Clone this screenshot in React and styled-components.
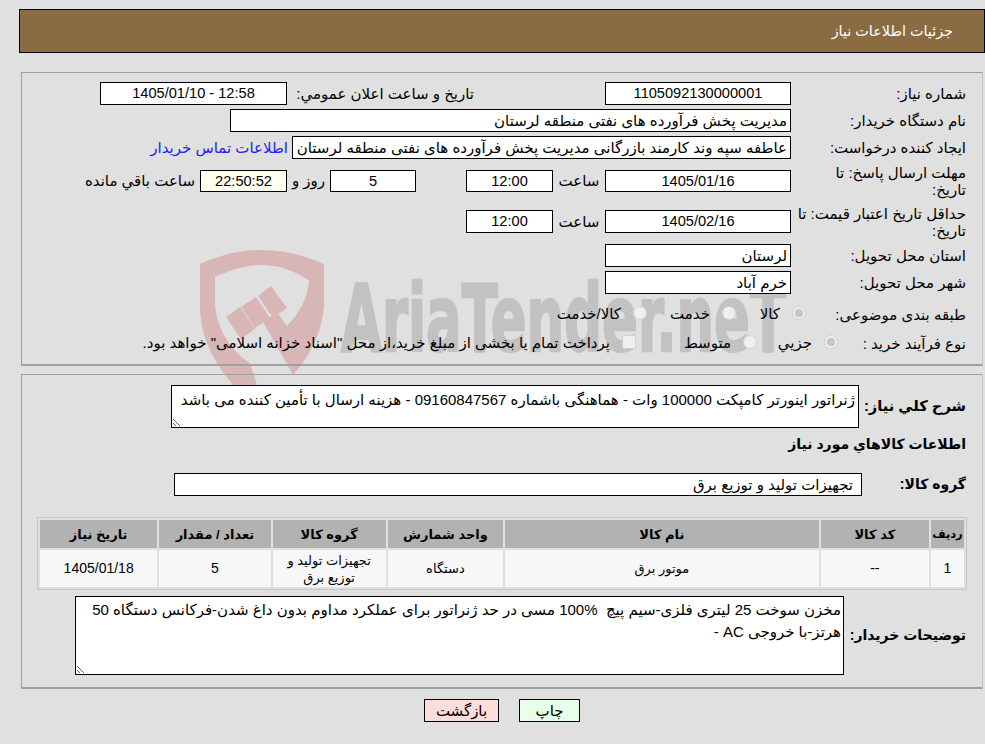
import styled, { createGlobalStyle } from 'styled-components'

const FONT = `"Liberation Sans", "DejaVu Sans", sans-serif`

const GlobalStyle = createGlobalStyle`
  html, body {
    margin: 0;
    padding: 0;
    background: #e0e0e0;
  }
  body {
    font-family: ${FONT};
    font-size: 15px;
    color: #000;
  }
`

const App = () => {
    return (
        <Page dir="rtl">
            <GlobalStyle />
            <Watermark />
            <Header>جزئیات اطلاعات نیاز</Header>

            <InfoPanel>
                <Row>
                    <Label>شماره نیاز:</Label>
                    <Field $w={186} $digits>1105092130000001</Field>
                    <Caption $w={318} $pad={131}>تاريخ و ساعت اعلان عمومي:</Caption>
                    <Field $w={187} $digits>12:58 - 1405/01/10</Field>
                </Row>
                <Row>
                    <Label>نام دستگاه خریدار:</Label>
                    <Field $w={561} $right>مدیریت پخش فرآورده های نفتی منطقه لرستان</Field>
                </Row>
                <Row>
                    <Label>ایجاد کننده درخواست:</Label>
                    <Field $w={499} $right>عاطفه سپه وند کارمند بازرگانی مدیریت پخش فرآورده های نفتی منطقه لرستان</Field>
                    <ContactLink href="#">اطلاعات تماس خریدار</ContactLink>
                </Row>
                <Row $h={36}>
                    <Label $pad={30}>مهلت ارسال پاسخ: تا تاریخ:</Label>
                    <Field $w={186} $h={22} $digits>1405/01/16</Field>
                    <Caption $w={52} $center>ساعت</Caption>
                    <Field $w={87} $h={22} $digits>12:00</Field>
                    <Caption $w={50} />
                    <Field $w={86} $h={22} $digits>5</Field>
                    <Caption $w={43} $center>روز و</Caption>
                    <Field $w={87} $h={22} $digits $timer>22:50:52</Field>
                    <Caption $w={112} $pad={5}>ساعت باقي مانده</Caption>
                </Row>
                <Row $h={37}>
                    <Label>حداقل تاریخ اعتبار قیمت: تا تاریخ:</Label>
                    <Field $w={186} $digits>1405/02/16</Field>
                    <Caption $w={52} $center>ساعت</Caption>
                    <Field $w={87} $digits>12:00</Field>
                </Row>
                <Row>
                    <Label>استان محل تحویل:</Label>
                    <Field $w={186} $right>لرستان</Field>
                </Row>
                <Row>
                    <Label>شهر محل تحویل:</Label>
                    <Field $w={186} $right>خرم آباد</Field>
                </Row>
                <Row $h={32}>
                    <Label $w={160}>طبقه بندی موضوعی:</Label>
                    <Option $w={70}><Radio $checked />کالا</Option>
                    <Option $w={89}><Radio />خدمت</Option>
                    <Option><Radio />کالا/خدمت</Option>
                </Row>
                <Row $h={18}>
                    <Label $w={128}>نوع فرآیند خرید :</Label>
                    <Option $w={81}><Radio $checked />جزيي</Option>
                    <Option $w={121}><Radio />متوسط</Option>
                    <Option><CheckBox />پرداخت تمام یا بخشی از مبلغ خرید،از محل "اسناد خزانه اسلامی" خواهد بود.</Option>
                </Row>
            </InfoPanel>

            <GoodsPanel>
                <Row $h={43}>
                    <BoldLabel $w={107} $size={14.7}>شرح کلي نياز:</BoldLabel>
                    <TextBox
                        $w={688}
                        $h={43}
                        $pad="4px 3px"
                        readOnly
                        defaultValue="ژنراتور اینورتر کامپکت 100000 وات - هماهنگی باشماره 09160847567 - هزینه ارسال با تأمین کننده می باشد"
                    />
                </Row>
                <Heading>اطلاعات کالاهاي مورد نياز</Heading>
                <Row>
                    <BoldLabel $w={104}>گروه کالا:</BoldLabel>
                    <Field $w={688} $right $indent={8}>تجهیزات تولید و توزیع برق</Field>
                </Row>
                <Table>
                    <thead>
                        <tr>
                            <Th $w={33} $size={11.5}>ردیف</Th>
                            <Th $w={108}>کد کالا</Th>
                            <Th $w={313}>نام کالا</Th>
                            <Th $w={115}>واحد شمارش</Th>
                            <Th $w={113}>گروه کالا</Th>
                            <Th $w={111}>تعداد / مقدار</Th>
                            <Th $w={117}>تاریخ نیاز</Th>
                        </tr>
                    </thead>
                    <tbody>
                        <tr>
                            <Td $digits>1</Td>
                            <Td $digits>--</Td>
                            <Td>موتور برق</Td>
                            <Td>دستگاه</Td>
                            <Td>تجهیزات تولید و توزیع برق</Td>
                            <Td $digits>5</Td>
                            <Td $digits>1405/01/18</Td>
                        </tr>
                    </tbody>
                </Table>
                <Row $h={79}>
                    <BoldLabel $w={122}>توضیحات خریدار:</BoldLabel>
                    <TextBox
                        $w={769}
                        $h={79}
                        $pad="2px"
                        $lh={22}
                        readOnly
                        defaultValue={'مخزن سوخت 25 لیتری فلزی-سیم پیچ  %100 مسی در حد ژنراتور برای عملکرد مداوم بدون داغ شدن-فرکانس دستگاه 50 هرتز-با خروجی AC -'}
                    />
                </Row>
            </GoodsPanel>

            <Actions>
                <ActionButton $w={61} $bg="#e8ffe8">چاپ</ActionButton>
                <ActionButton $w={75} $bg="#ffdcdc">بازگشت</ActionButton>
            </Actions>
        </Page>
    )
}

const Watermark = () => (
    <WatermarkSvg viewBox="190 240 620 160" width="620" height="160">
        <path
            fill="#d8b6b6"
            fillRule="evenodd"
            d="M200 264C222 254 242 250 262 250C284 250 304 255 324 264L324 305C322 335 308 358 293 375L263 322L277 312L287 326C300 312 308 298 309 280C292 270 278 265 262 265C246 265 230 270 215 277L215 305C217 330 232 352 250 363L257 385L233 385C212 360 200 335 200 305Z"
        />
        <path fill="#d8b6b6" d="M226 317L240 307L255 329L241 339Z" />
        <path fill="#d8b6b6" d="M241 307L256 297L270 318L255 328Z" />
        <path fill="#d8b6b6" d="M258 296L271 286L287 308L273 318Z" />
        <WatermarkText x="341" y="351" textLength="445" lengthAdjust="spacingAndGlyphs">
            AriaTender.neT
        </WatermarkText>
    </WatermarkSvg>
)

const Page = styled.div`
  position: relative;
  width: 985px;
  height: 744px;
  box-sizing: border-box;
  padding: 9px 0 0 19px;
  overflow: hidden;
`

const WatermarkSvg = styled.svg`
  position: absolute;
  left: 190px;
  top: 240px;
  pointer-events: none;
`

const WatermarkText = styled.text`
  direction: ltr;
  unicode-bidi: bidi-override;
  font-family: "DejaVu Sans", sans-serif;
  font-weight: 700;
  font-size: 92px;
  fill: #c2c2c2;
  stroke: #c2c2c2;
  stroke-width: 2.5px;
`

const Header = styled.div`
  box-sizing: border-box;
  height: 44px;
  padding-right: 31px;
  background: #8b6c42;
  border: 1px solid #000;
  color: #fff;
  font-size: 14.4px;
  line-height: 42px;
`

const Panel = styled.div`
  position: relative;
  box-sizing: border-box;
  margin-left: 2px;
  margin-right: 2px;
  padding-right: 16px;
  border: 1px solid #a0a0a0;
  border-bottom-width: 2px;
  border-right-color: #c4c4c4;
  display: flex;
  flex-direction: column;
`

const InfoPanel = styled(Panel)`
  height: 294px;
  margin-top: 19px;
  padding-top: 9px;
  gap: 4px;
`

const GoodsPanel = styled(Panel)`
  height: 315px;
  margin-top: 8px;
  padding-top: 10px;
`

const Row = styled.div`
  display: flex;
  align-items: center;
  height: ${p => p.$h || 23}px;
`

const Label = styled.div`
  flex: none;
  box-sizing: border-box;
  width: ${p => p.$w || 175}px;
  padding-left: ${p => p.$pad || 5}px;
  line-height: 17px;
`

const BoldLabel = styled(Label)`
  font-weight: 700;
  font-size: ${p => p.$size || 14}px;
  padding-left: 0;
`

const Field = styled.div`
  flex: none;
  box-sizing: border-box;
  width: ${p => p.$w}px;
  height: ${p => p.$h || 23}px;
  padding: 0 ${p => p.$indent || 3}px;
  border: 1px solid #000;
  background: ${p => (p.$timer ? '#fffff0' : '#fff')};
  font-size: ${p => (p.$digits ? '14.6px' : '15px')};
  line-height: ${p => (p.$h || 23) - 2}px;
  text-align: ${p => (p.$right ? 'right' : 'center')};
  white-space: nowrap;
  overflow: hidden;
`

const Caption = styled.div`
  flex: none;
  box-sizing: border-box;
  width: ${p => p.$w}px;
  padding-right: ${p => p.$pad || 0}px;
  text-align: ${p => (p.$center ? 'center' : 'right')};
  white-space: nowrap;
`

const ContactLink = styled.a`
  margin-right: 4px;
  color: #2222ee;
  text-decoration: none;
  white-space: nowrap;
`

const Option = styled.label`
  flex: none;
  display: flex;
  align-items: center;
  gap: 12px;
  width: ${p => (p.$w ? `${p.$w}px` : 'auto')};
  white-space: nowrap;
`

const Radio = styled.span`
  flex: none;
  box-sizing: border-box;
  width: 14px;
  height: 14px;
  margin-bottom: 3px;
  border-radius: 50%;
  border: 1px solid #d2d2d2;
  background: ${p => (p.$checked
    ? 'radial-gradient(circle, #c6c6c6 0 4px, #efefef 4.5px)'
    : '#efefef')};
`

const CheckBox = styled.span`
  flex: none;
  box-sizing: border-box;
  width: 14px;
  height: 14px;
  margin-bottom: 3px;
  border-radius: 2px;
  border: 1px solid #d2d2d2;
  background: #efefef;
`

const TextBox = styled.textarea`
  flex: none;
  box-sizing: border-box;
  width: ${p => p.$w}px;
  height: ${p => p.$h}px;
  margin: 0;
  padding: ${p => p.$pad};
  border: 1px solid #000;
  border-radius: 0;
  outline: none;
  background: #fff;
  color: #000;
  font-family: ${FONT};
  font-size: 15px;
  line-height: ${p => p.$lh || 19}px;
  overflow: hidden;
`

const Heading = styled.div`
  margin: 8px 0 20px;
  font-weight: 700;
  font-size: 14px;
  line-height: 17px;
`

const Table = styled.table`
  width: 930px;
  margin: 21px -1px 6px 0;
  border: 1px solid #c6c6c6;
  border-collapse: separate;
  border-spacing: 2px;
  table-layout: fixed;
  flex: none;
`

const Th = styled.th`
  width: ${p => p.$w}px;
  height: 28px;
  padding: 0;
  background: #b2b2b2;
  font-size: ${p => p.$size || 13}px;
  font-weight: 700;
`

const Td = styled.td`
  height: 37px;
  padding: 0;
  background: #f7f7f7;
  font-size: ${p => (p.$digits ? '14px' : '13px')};
  line-height: 17px;
  text-align: center;
`

const Actions = styled.div`
  position: relative;
  display: flex;
  justify-content: center;
  gap: 20px;
  margin-top: 10px;
`

const ActionButton = styled.button`
  box-sizing: border-box;
  width: ${p => p.$w}px;
  height: 23px;
  padding: 0;
  border: 1px solid #000;
  border-radius: 0;
  background: ${p => p.$bg};
  color: #000;
  font-family: ${FONT};
  font-size: 15px;
`

export default App
